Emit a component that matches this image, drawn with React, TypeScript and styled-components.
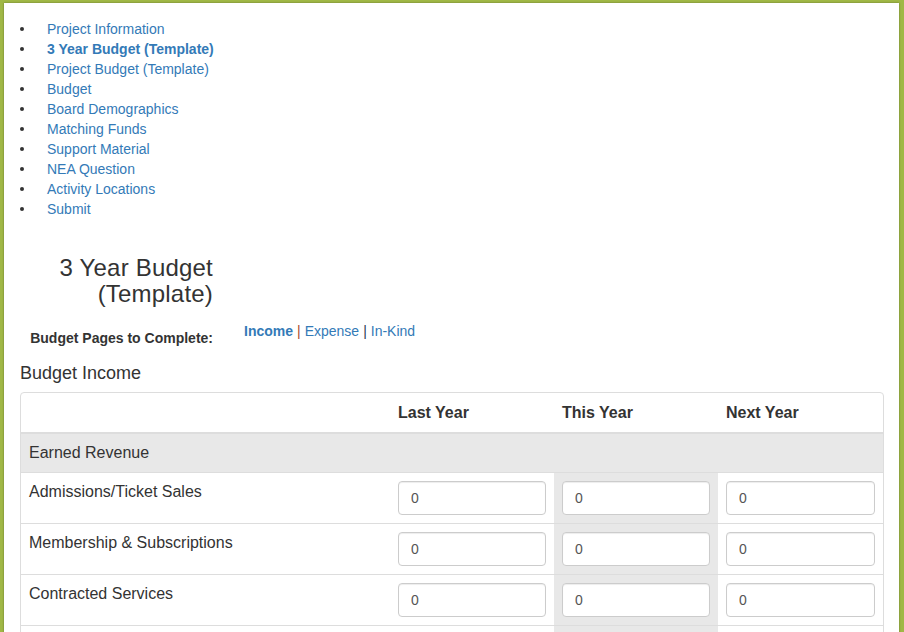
import React from 'react';
import styled, { createGlobalStyle } from 'styled-components';

const GlobalStyle = createGlobalStyle`
  html, body {
    margin: 0;
    padding: 0;
    background: #a0b846;
    font-family: "Liberation Sans", Arial, sans-serif;
    color: #333;
  }
`;

const Page = styled.div`
  background: #fff;
  margin: 3px 5px 0 4px;
  min-height: 640px;
  padding: 16px 15px 0 16px;
  box-shadow: 0 0 2px rgba(0, 0, 0, 0.35);
  box-sizing: border-box;
`;

const NavList = styled.ul`
  list-style: none;
  margin: 0;
  padding: 0;
`;

const NavItem = styled.li`
  display: flex;
  align-items: center;
  font-size: 14px;
  line-height: 20px;

  &::before {
    content: '';
    width: 4px;
    height: 4px;
    border-radius: 50%;
    background: #333;
    margin: 0 23px 0 0;
    flex: none;
  }
`;

const NavLink = styled.a<{ $active?: boolean }>`
  color: #337ab7;
  text-decoration: none;
  font-weight: ${(p) => (p.$active ? 700 : 400)};
`;

const FormRow = styled.div<{ $top: number }>`
  display: flex;
  margin-top: ${(p) => p.$top}px;
`;

const LabelCol = styled.div`
  width: 193px;
  flex: none;
  text-align: right;
`;

const ValueCol = styled.div`
  padding-left: 31px;
  font-size: 14px;
  line-height: 20px;
`;

const PageTitle = styled.h2`
  margin: 0;
  font-size: 24px;
  line-height: 26px;
  font-weight: 500;
  color: #333;
  letter-spacing: 0.2px;
`;

const ControlLabel = styled.label`
  display: block;
  padding-top: 7px;
  font-size: 14px;
  line-height: 20px;
  font-weight: 700;
  color: #333;
`;

const Pipe = styled.span<{ $color: string }>`
  color: ${(p) => p.$color};
  margin: 0 4px;
`;

const SectionTitle = styled.h3`
  margin: 15px 0 9px;
  font-size: 18px;
  line-height: 20px;
  font-weight: 500;
  color: #333;
`;

const TableFrame = styled.div`
  border: 1px solid #ddd;
  border-radius: 4px;
  overflow: hidden;
`;

const Table = styled.table`
  width: 100%;
  border-collapse: collapse;
  table-layout: fixed;
  font-size: 16px;
  line-height: 22px;
`;

const Th = styled.th`
  text-align: left;
  font-weight: 700;
  padding: 9px 8px 8px;
  border-bottom: 2px solid #ddd;
  color: #333;
`;

const GroupRow = styled.tr`
  background: #e8e8e8;
`;

const Td = styled.td<{ $shade?: boolean }>`
  padding: 8px;
  vertical-align: top;
  border-top: 1px solid #ddd;
  background: ${(p) => (p.$shade ? '#e8e8e8' : 'transparent')};
  color: #333;
`;

const AmountInput = styled.input`
  display: block;
  width: 100%;
  height: 34px;
  box-sizing: border-box;
  padding: 6px 12px;
  font-family: "Liberation Sans", Arial, sans-serif;
  font-size: 14px;
  color: #555;
  background: #fff;
  border: 1px solid #ccc;
  border-radius: 4px;
  box-shadow: inset 0 1px 1px rgba(0, 0, 0, 0.075);
`;

const navItems = [
  'Project Information',
  '3 Year Budget (Template)',
  'Project Budget (Template)',
  'Budget',
  'Board Demographics',
  'Matching Funds',
  'Support Material',
  'NEA Question',
  'Activity Locations',
  'Submit',
];

const incomeRows = [
  'Admissions/Ticket Sales',
  'Membership & Subscriptions',
  'Contracted Services',
  'Other Earned Revenue',
];

export default function App() {
  return (
    <>
      <GlobalStyle />
      <Page>
        <NavList>
          {navItems.map((item) => (
            <NavItem key={item}>
              <NavLink href="#" $active={item === '3 Year Budget (Template)'}>
                {item}
              </NavLink>
            </NavItem>
          ))}
        </NavList>

        <FormRow $top={36}>
          <LabelCol>
            <PageTitle>3 Year Budget (Template)</PageTitle>
          </LabelCol>
        </FormRow>

        <FormRow $top={14}>
          <LabelCol>
            <ControlLabel>Budget Pages to Complete:</ControlLabel>
          </LabelCol>
          <ValueCol>
            <NavLink href="#" $active>Income</NavLink>
            <Pipe $color="#a6492a">|</Pipe>
            <NavLink href="#">Expense</NavLink>
            <Pipe $color="#2b3b52">|</Pipe>
            <NavLink href="#">In-Kind</NavLink>
          </ValueCol>
        </FormRow>

        <SectionTitle>Budget Income</SectionTitle>

        <TableFrame>
          <Table>
            <colgroup>
              <col style={{ width: 369 }} />
              <col style={{ width: 164 }} />
              <col style={{ width: 164 }} />
              <col />
            </colgroup>
            <thead>
              <tr>
                <Th />
                <Th>Last Year</Th>
                <Th>This Year</Th>
                <Th>Next Year</Th>
              </tr>
            </thead>
            <tbody>
              <GroupRow>
                <Td colSpan={4}>Earned Revenue</Td>
              </GroupRow>
              {incomeRows.map((row) => (
                <tr key={row}>
                  <Td>{row}</Td>
                  <Td><AmountInput defaultValue="0" /></Td>
                  <Td $shade><AmountInput defaultValue="0" /></Td>
                  <Td><AmountInput defaultValue="0" /></Td>
                </tr>
              ))}
            </tbody>
          </Table>
        </TableFrame>
      </Page>
    </>
  );
}
